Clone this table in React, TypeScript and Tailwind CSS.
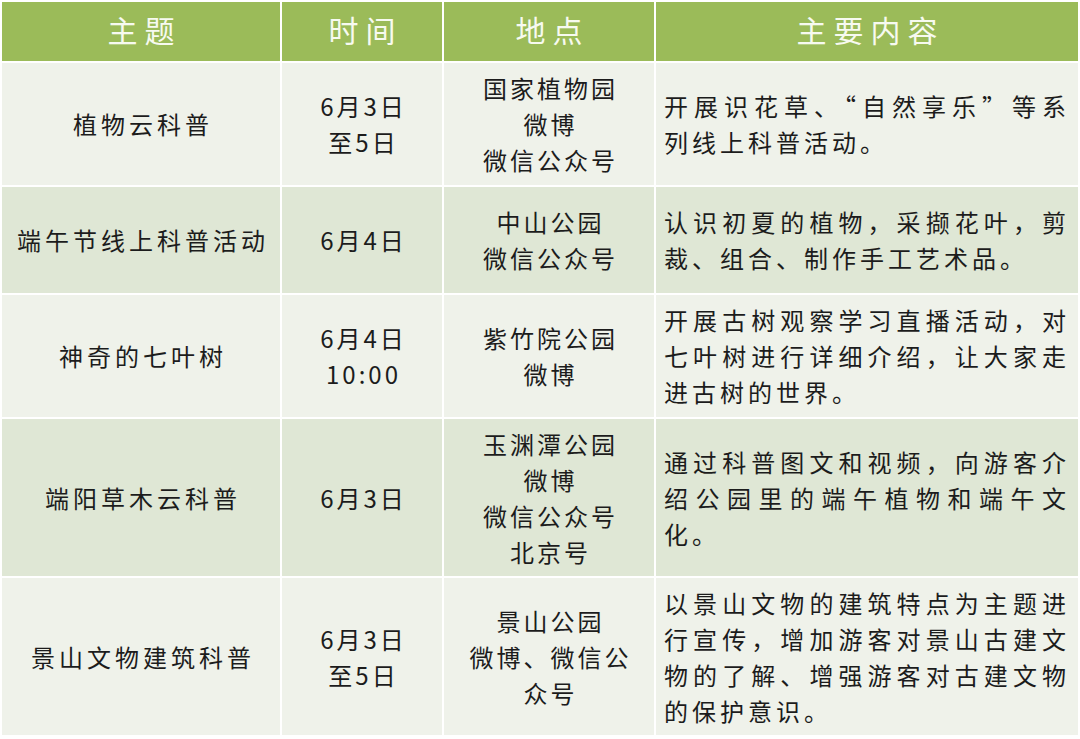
const columns = ['主题', '时间', '地点', '主要内容'];

type Row = {
  topic: string;
  time: string[];
  place: string[];
  content: string[];
  height: string;
  tint: string;
};

const rows: Row[] = [
  {
    topic: '植物云科普',
    time: ['6月3日', '至5日'],
    place: ['国家植物园', '微博', '微信公众号'],
    content: ['开展识花草、“自然享乐”等系', '列线上科普活动。'],
    height: 'h-[122px]',
    tint: 'bg-[#eff2ea]',
  },
  {
    topic: '端午节线上科普活动',
    time: ['6月4日'],
    place: ['中山公园', '微信公众号'],
    content: ['认识初夏的植物，采撷花叶，剪', '裁、组合、制作手工艺术品。'],
    height: 'h-[106px]',
    tint: 'bg-[#dfe7d5]',
  },
  {
    topic: '神奇的七叶树',
    time: ['6月4日', '10:00'],
    place: ['紫竹院公园', '微博'],
    content: ['开展古树观察学习直播活动，对', '七叶树进行详细介绍，让大家走', '进古树的世界。'],
    height: 'h-[122px]',
    tint: 'bg-[#eff2ea]',
  },
  {
    topic: '端阳草木云科普',
    time: ['6月3日'],
    place: ['玉渊潭公园', '微博', '微信公众号', '北京号'],
    content: ['通过科普图文和视频，向游客介', '绍公园里的端午植物和端午文', '化。'],
    height: 'h-[157px]',
    tint: 'bg-[#dfe7d5]',
  },
  {
    topic: '景山文物建筑科普',
    time: ['6月3日', '至5日'],
    place: ['景山公园', '微博、微信公', '众号'],
    content: ['以景山文物的建筑特点为主题进', '行宣传，增加游客对景山古建文', '物的了解、增强游客对古建文物', '的保护意识。'],
    height: 'h-[157px]',
    tint: 'bg-[#eff2ea]',
  },
];

function Centered({ lines }: { lines: string[] }) {
  return (
    <div className="flex flex-col items-center text-center">
      {lines.map((l) => (
        <span key={l} className="pl-[3px] tracking-[3px]">{l}</span>
      ))}
    </div>
  );
}

export default function App() {
  return (
    <div
      lang="zh-CN"
      className="w-[1080px] h-[739px] bg-white p-[2px] text-[#1c1c1c]"
      style={{ fontFamily: '"Noto Sans CJK SC", "Noto Sans", sans-serif' }}
    >
      <div className="grid grid-cols-[278px_160px_210px_422px] gap-[2px] text-[24px] leading-[36px]">
        {/* Header */}
        {columns.map((c) => (
          <div
            key={c}
            className="h-[59px] bg-[#9bbb59] flex items-center justify-center pb-[5px] text-[#f7faf0] text-[30px] font-normal tracking-[7px] pl-[7px]"
          >
            {c}
          </div>
        ))}

        {/* Body */}
        {rows.map((r) => (
          <div key={r.topic} className="contents">
            <div className={`${r.height} ${r.tint} flex items-center justify-center`}>
              <span className="pl-[4px] tracking-[4px]">{r.topic}</span>
            </div>
            <div className={`${r.height} ${r.tint} flex items-center justify-center`}>
              <Centered lines={r.time} />
            </div>
            <div className={`${r.height} ${r.tint} flex items-center justify-center px-3`}>
              <Centered lines={r.place} />
            </div>
            <div className={`${r.height} ${r.tint} flex flex-col justify-center pl-[8px] pr-[10px]`}>
              {r.content.map((l, i) => (
                <span
                  key={l}
                  className={
                    i < r.content.length - 1
                      ? 'block tracking-[2px] text-justify [text-align-last:justify]'
                      : 'block tracking-[4px]'
                  }
                >
                  {l}
                </span>
              ))}
            </div>
          </div>
        ))}
      </div>
    </div>
  );
}
